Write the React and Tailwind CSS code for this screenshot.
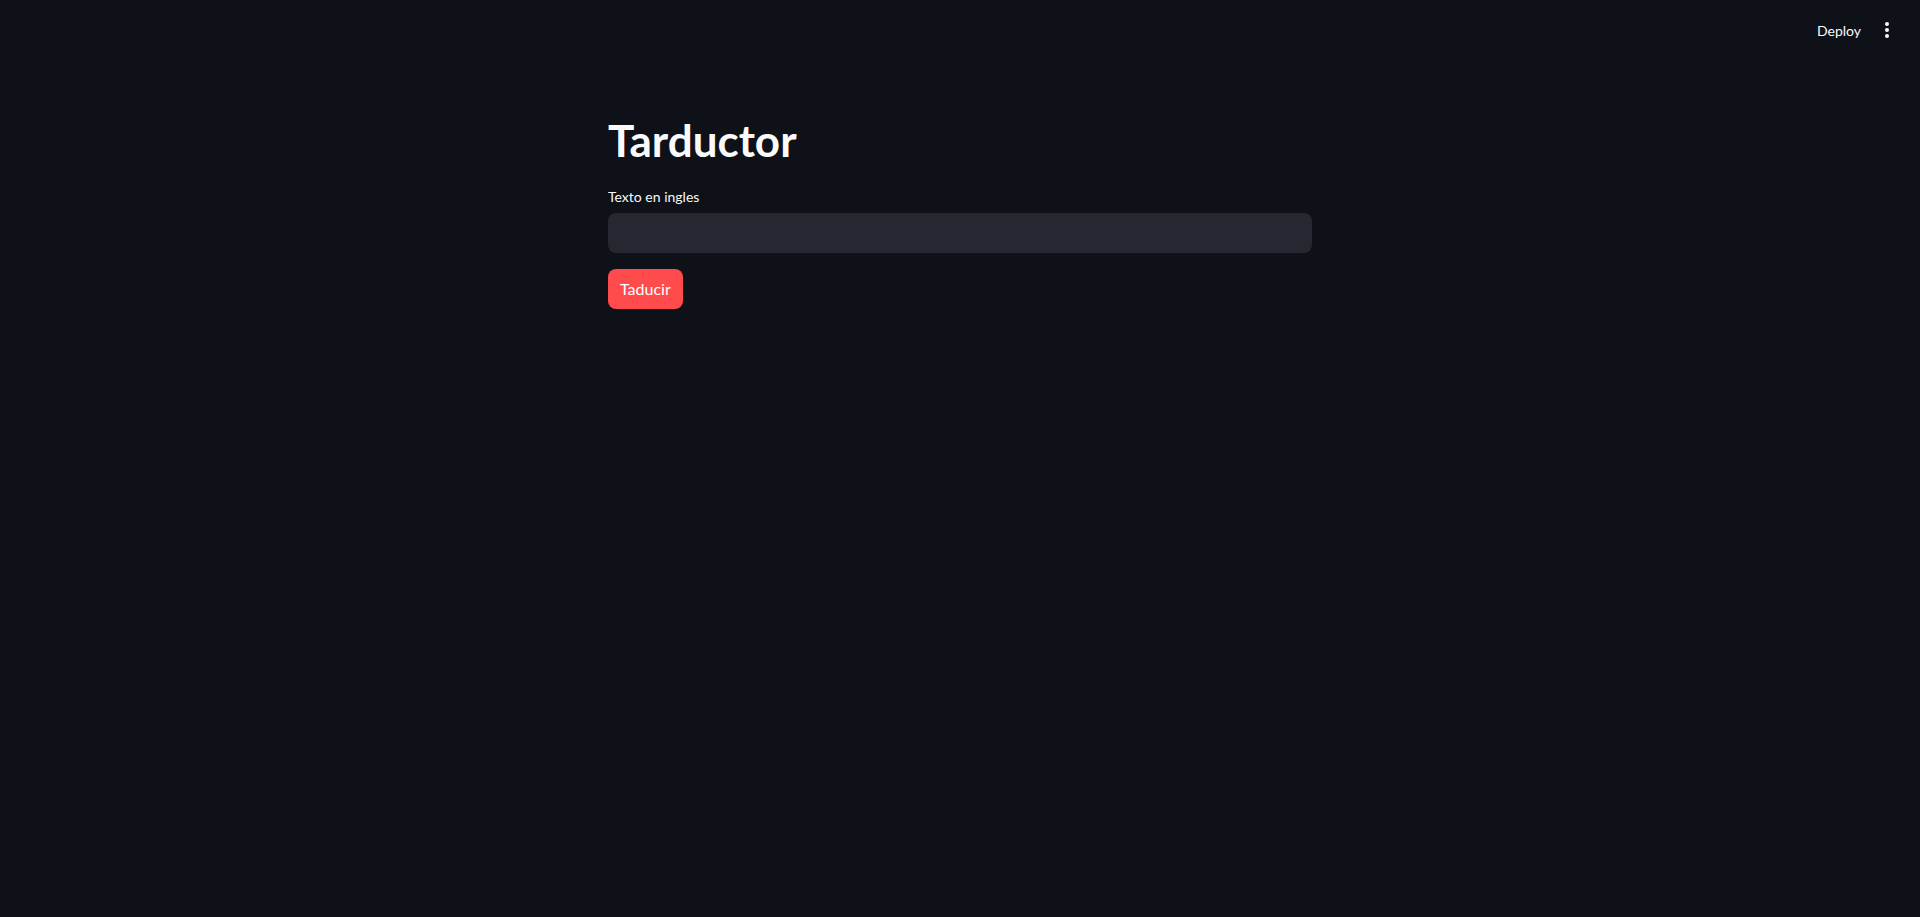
import React, { useState } from "react";

const font = { fontFamily: '"Lato", "Noto Sans", sans-serif' };

export default function App() {
  const [text, setText] = useState("");

  return (
    <div className="min-h-screen bg-[#0e1117] text-[#fafafa]" style={font}>
      {/* top header */}
      <header className="flex h-[60px] items-center justify-end gap-[2px] pr-[17px]">
        <button className="rounded px-2 py-1 text-[14px] text-[#fafafa]">Deploy</button>
        <button className="flex h-8 w-8 flex-col items-center justify-center gap-[2px]">
          <span className="h-[4px] w-[4px] rounded-full bg-[#fafafa]"></span>
          <span className="h-[4px] w-[4px] rounded-full bg-[#fafafa]"></span>
          <span className="h-[4px] w-[4px] rounded-full bg-[#fafafa]"></span>
        </button>
      </header>

      <main className="mx-auto w-[736px] px-4 pt-[48px]">
        <h1 className="pt-[6px] pb-[20px] text-[44px] font-bold leading-[1.2]">Tarductor</h1>

        <label htmlFor="texto" className="block text-[14px] leading-[20px] mb-[6px]">
          Texto en ingles
        </label>
        <input
          id="texto"
          value={text}
          onChange={(e) => setText(e.target.value)}
          className="block h-[40px] w-full rounded-lg bg-[#262730] px-3 text-[16px] text-[#fafafa] outline-none"
        />

        <button className="mt-[16px] h-[40px] rounded-lg bg-[#ff4b4b] px-3 text-[16px] text-white">
          Taducir
        </button>
      </main>
    </div>
  );
}
